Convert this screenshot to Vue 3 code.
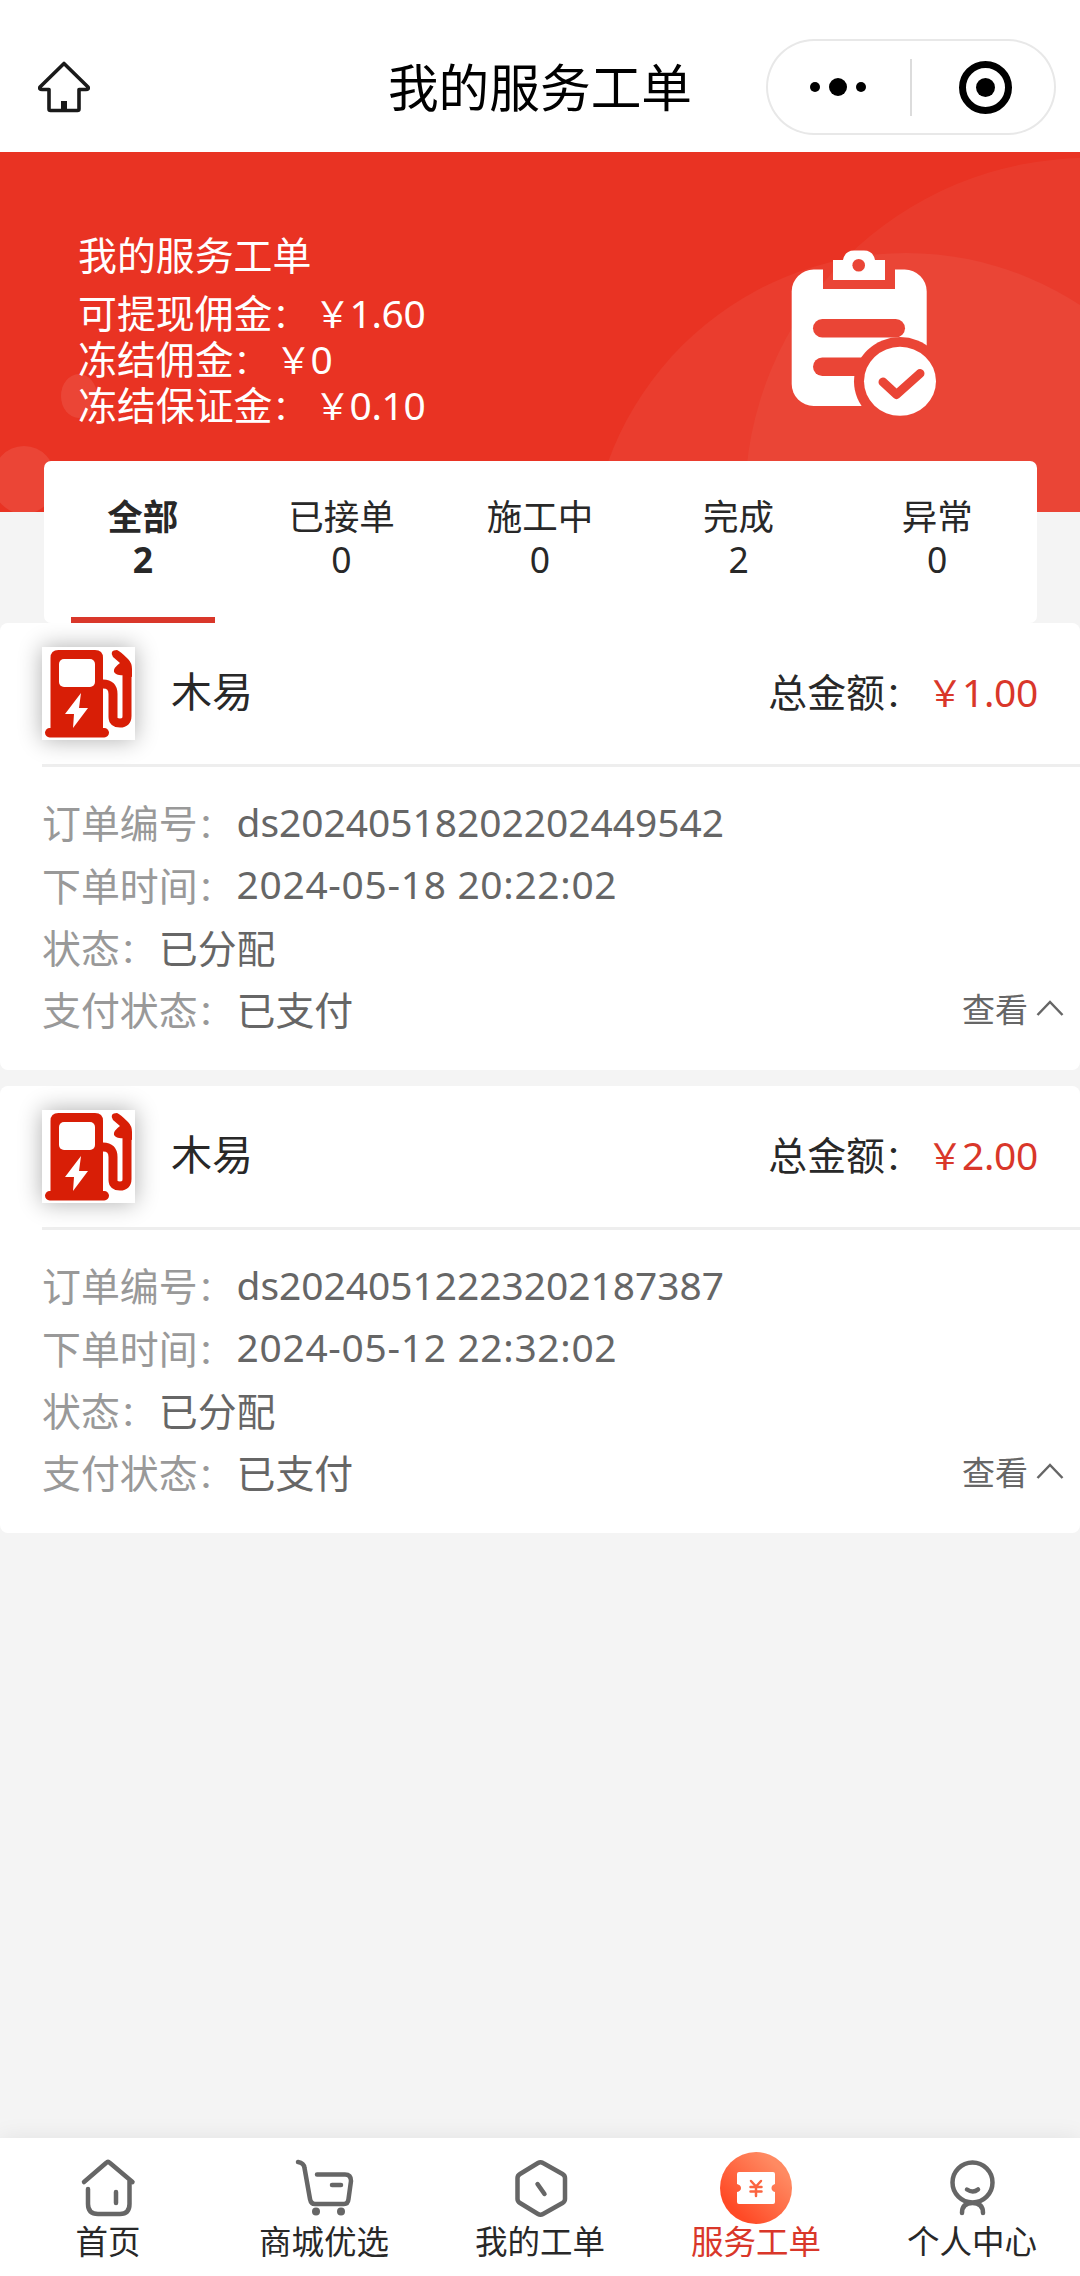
<script setup>
const summary = [
  { label: '可提现佣金', value: '1.60' },
  { label: '冻结佣金', value: '0' },
  { label: '冻结保证金', value: '0.10' },
]
const tabs = [
  { label: '全部', count: 2 },
  { label: '已接单', count: 0 },
  { label: '施工中', count: 0 },
  { label: '完成', count: 2 },
  { label: '异常', count: 0 },
]
const orders = [
  { name: '木易', total: '1.00', no: 'ds20240518202202449542', time: '2024-05-18 20:22:02', status: '已分配', pay: '已支付' },
  { name: '木易', total: '2.00', no: 'ds20240512223202187387', time: '2024-05-12 22:32:02', status: '已分配', pay: '已支付' },
]
const nav = [
  { label: '首页', icon: 'home' },
  { label: '商城优选', icon: 'cart' },
  { label: '我的工单', icon: 'hex' },
  { label: '服务工单', icon: 'ticket' },
  { label: '个人中心', icon: 'user' },
]
</script>

<template>
  <div class="page">
    <header class="bar">
      <svg class="bar-home" viewBox="0 0 52 52" width="52" height="52">
        <path d="M26 2.500 L2 26 Q1 28.500 4 28.500 H11 V48 Q11 49.500 12.500 49.500 H39.500 Q41 49.500 41 48 V28.500 H48 Q51 28.500 50 26 Z" fill="none" stroke="#1a1a1a" stroke-width="3.600" stroke-linejoin="round" />
        <rect x="23" y="40" width="6" height="9" fill="#1a1a1a" />
      </svg>
      <h1 class="title">我的服务工单</h1>
      <div class="capsule">
        <svg viewBox="0 0 290 96" width="290" height="96">
          <circle cx="49" cy="48" r="5" />
          <circle cx="72" cy="48" r="9" />
          <circle cx="95" cy="48" r="5" />
          <rect x="144" y="20" width="2" height="57" fill="#dcdcdc" />
          <circle cx="219.500" cy="48.500" r="23" fill="none" stroke="#000" stroke-width="7" />
          <circle cx="219.500" cy="48.500" r="9.500" />
        </svg>
      </div>
    </header>

    <section class="banner">
      <svg class="banner-bg" viewBox="0 152 1080 360" width="1080" height="360">
        <g fill="#fff">
          <circle cx="1088" cy="501" r="343" opacity=".045" />
          <circle cx="906" cy="570" r="317" opacity=".05" />
          <ellipse cx="24" cy="480" rx="32" ry="34" opacity=".09" />
          <ellipse cx="79" cy="396" rx="18" ry="22" opacity=".09" />
        </g>
      </svg>
      <div class="banner-text">
        <div class="banner-title">我的服务工单</div>
        <div v-for="s in summary" :key="s.label" class="banner-line">{{ s.label }}<span class="colon">：</span><span class="yen">￥</span><span class="digits">{{ s.value }}</span></div>
      </div>
      <svg class="clipboard" viewBox="790 249 150 170" width="150" height="170">
        <mask id="board">
          <rect x="790" y="249" width="150" height="170" fill="#fff" />
          <rect x="823" y="249" width="72" height="40" fill="#000" />
          <rect x="813" y="319" width="92" height="18.500" rx="9.250" fill="#000" />
          <rect x="813" y="357.500" width="92" height="18.500" rx="9.250" fill="#000" />
          <ellipse cx="900" cy="381.500" rx="46" ry="44.500" fill="#000" />
        </mask>
        <mask id="tick">
          <rect x="790" y="249" width="150" height="170" fill="#fff" />
          <circle cx="858.700" cy="265.300" r="6.300" fill="#000" />
          <path d="M883 382 L896.500 394.500 L920 373.500" fill="none" stroke="#000" stroke-width="9" stroke-linecap="round" stroke-linejoin="round" />
        </mask>
        <rect x="791.700" y="269.500" width="135" height="136.500" rx="22" fill="#fff" mask="url(#board)" />
        <g mask="url(#tick)" fill="#fff">
          <path d="M833 260 H843 Q845 250.500 854 250.500 H864 Q873 250.500 875 260 H885 V280 H833 Z" />
          <ellipse cx="900" cy="381.300" rx="36" ry="34.500" />
        </g>
      </svg>
    </section>

    <nav class="tabs">
      <div v-for="(t, i) in tabs" :key="t.label" class="tab" :class="{ active: i === 0 }">
        <span>{{ t.label }}</span>
        <span>{{ t.count }}</span>
      </div>
    </nav>

    <main class="orders">
      <article v-for="o in orders" :key="o.no" class="card">
        <div class="card-head">
          <div class="thumb">
            <svg viewBox="0 0 93 93" width="93" height="93">
              <g fill="#d81e06">
                <path d="M8.500 86 V11 Q8.500 3 16.500 3 H53 Q61 3 61 11 V86 Z" />
                <rect x="3" y="81" width="64" height="9.500" rx="4.700" />
              </g>
              <rect x="17" y="12" width="36" height="28" rx="5" fill="#fff" />
              <path d="M39 46 L23 67 H32 L31 81 L46 61 H37 Z" fill="#fff" />
              <path d="M61 37 Q71 37 71 47 V70 Q71 76 78 76 Q85 76 85 69 V22" fill="none" stroke="#d81e06" stroke-width="9" />
              <path d="M71 10 Q67 3 75 3 Q78 4 86 12 Q90 16 90 22 V30 L82 28 Q75 29 72 25 Q71 21 78 16 Z" fill="#d81e06" />
            </svg>
          </div>
          <div class="name">{{ o.name }}</div>
          <div class="total">总金额<span class="colon">：</span><span class="money"><span class="yen">￥</span><span class="digits">{{ o.total }}</span></span></div>
        </div>
        <div class="card-body">
          <div class="row"><span class="key">订单编号<span class="colon">：</span></span><span class="no">{{ o.no }}</span></div>
          <div class="row"><span class="key">下单时间<span class="colon">：</span></span><span class="time">{{ o.time }}</span></div>
          <div class="row"><span class="key">状态<span class="colon">：</span></span>{{ o.status }}</div>
          <div class="row">
            <span class="key">支付状态<span class="colon">：</span></span>{{ o.pay }}
            <span class="more">查看
              <svg viewBox="0 0 28 16" width="28" height="16"><path d="M1.500 15 L14 2 L26.500 15" fill="none" stroke="#666" stroke-width="2.500" /></svg>
            </span>
          </div>
        </div>
      </article>
    </main>

    <footer class="nav">
      <div v-for="(n, i) in nav" :key="n.label" class="nav-item" :class="{ on: i === 3 }">
        <svg viewBox="0 0 76 76" width="76" height="76" fill="none" stroke="#666" stroke-width="4.500" stroke-linecap="round" stroke-linejoin="round">
          <template v-if="n.icon === 'home'">
            <path d="M14 32 L36 13 Q38 11 40 13 L62.500 32 M59.500 30 V54 Q59.500 64 50 64 H28 Q18 64 18 54 V39" />
            <path d="M46 42 V53" />
          </template>
          <template v-else-if="n.icon === 'cart'">
            <path d="M12 12 Q18 13 18.500 18 L24 49 Q25 54 29 54 H58 Q62 54 62.500 49 L65 31 Q65 24.500 59 24.500 H31" />
            <path d="M46 35 H55" />
            <circle cx="30" cy="61.500" r="4" fill="#666" stroke="none" />
            <circle cx="55" cy="61.500" r="4" fill="#666" stroke="none" />
          </template>
          <template v-else-if="n.icon === 'hex'">
            <path d="M36 13 Q38.500 11.500 41 13 L60.500 24 Q63 25.500 63 28 V49 Q63 51.500 60.500 53 L41 64 Q38.500 65.500 36 64 L18 53 Q15.500 51.500 15.500 49 V28 Q15.500 25.500 18 24 Z" />
            <path d="M35.500 34 L42.500 44" />
          </template>
          <template v-else-if="n.icon === 'ticket'">
            <defs>
              <linearGradient id="orange" x1="0" y1="1" x2="1" y2="0">
                <stop offset="0.200" stop-color="#ff4a26" />
                <stop offset="0.800" stop-color="#ff8a62" />
              </linearGradient>
            </defs>
            <g stroke="none">
              <circle cx="38" cy="38" r="36" fill="url(#orange)" />
              <path d="M21 22 H55 Q57 22 57 24 V34 Q53.500 35 53.500 38 Q53.500 41 57 42 V52 Q57 54 55 54 H21 Q19 54 19 52 V42 Q23 41 23 38 Q23 35 19 34 V24 Q19 22 21 22 Z" fill="#fff" />
            </g>
            <path d="M33 31 L38 36.500 L43 31 M38 36.500 V46 M32.500 37 H43.500 M32.500 41.500 H43.500" stroke="#fb6440" stroke-width="2.500" />
          </template>
          <template v-else>
            <circle cx="38.500" cy="32.500" r="20" />
            <path d="M33 39.500 Q39 43.500 44 39.500 M28 63 Q28 53 38.500 53 Q49 53 49 63" />
          </template>
        </svg>
        <span>{{ n.label }}</span>
      </div>
    </footer>
  </div>
</template>

<style>
body {
  background: #f4f4f4;
}
</style>

<style scoped>
.page {
  width: 1080px;
  height: 2276px;
  display: flex;
  flex-direction: column;
  background: #f4f4f4;
  font-family: "Noto Sans", "Noto Sans CJK SC", sans-serif;
  font-size: 38.900px;
  color: #282828;
  overflow: hidden;
}
.bar {
  height: 152px;
  flex: none;
  display: grid;
  grid-template-columns: 1fr auto 1fr;
  align-items: center;
  padding: 24px 24px 0 38px;
  box-sizing: border-box;
  background: #fff;
}
.bar-home {
  display: block;
  margin-top: -3px;
}
.title {
  margin: 0 14px 1px 0;
  font-weight: 400;
  font-size: 50.700px;
  line-height: 60px;
  color: #000;
}
.capsule {
  justify-self: end;
  width: 290px;
  height: 96px;
  box-sizing: border-box;
  border-radius: 48px;
  box-shadow: inset 0 0 0 2px #e8e8e8;
  margin-bottom: 2px;
}
.banner {
  position: relative;
  height: 360px;
  flex: none;
  display: flex;
  justify-content: space-between;
  background: #e93323;
  color: #fff;
}
.banner-bg {
  position: absolute;
  left: 0;
  top: 0;
}
.banner-text {
  position: relative;
  padding: 80px 0 0 78px;
  line-height: 46px;
}
.banner-title {
  margin-bottom: 12px;
}
.banner-line {
  height: 46px;
}
.colon {
  margin-right: 5px;
  font-size: 34px;
  line-height: 1;
}
.yen {
  margin: 0 -1px 0 3px;
  font-size: 36px;
  line-height: 1;
}
.digits {
  letter-spacing: -0.300px;
}
.clipboard {
  position: relative;
  margin: 97px 140px 0 0;
}
.tabs {
  position: relative;
  flex: none;
  display: flex;
  width: 993px;
  height: 162px;
  margin: -51px auto 0 44px;
  border-radius: 7px;
  background: #fff;
  font-size: 35.500px;
}
.tab {
  flex: 1;
  display: flex;
  flex-direction: column;
  align-items: center;
  padding: 34px 1px 0 0;
  line-height: 42.500px;
}
.active {
  font-weight: 700;
  background: linear-gradient(#d9372a, #d9372a) center bottom / 144px 6px no-repeat;
}
.orders {
  flex: 1;
  display: flex;
  flex-direction: column;
  gap: 16px;
}
.card {
  height: 447px;
  border-radius: 8px;
  background: #fff;
}
.card-head {
  display: flex;
  align-items: center;
  height: 144px;
  box-sizing: border-box;
  padding: 0 42px 0 0;
  margin-left: 42px;
  border-bottom: 3px solid #eee;
}
.thumb {
  width: 93px;
  height: 93px;
  background: #fff;
  box-shadow: 0 0 22px rgba(0, 0, 0, 0.32);
}
.name {
  flex: 1;
  margin: 0 0 10px 36px;
  font-size: 41px;
}
.total {
  margin-bottom: 8px;
}
.card-body {
  padding: 23px 16px 0 42px;
  color: #666;
}
.row {
  display: flex;
  align-items: center;
  height: 62.400px;
}
.key {
  color: #999;
}
.time {
  letter-spacing: 0.700px;
}
.money {
  color: #d9372a;
}
.more {
  display: flex;
  align-items: center;
  gap: 8px;
  margin-left: auto;
  font-size: 33px;
}
.nav {
  flex: none;
  display: flex;
  height: 138px;
  background: #fff;
  box-shadow: 0 0 22px rgba(0, 0, 0, 0.08);
}
.nav-item {
  flex: 1;
  display: flex;
  flex-direction: column;
  align-items: center;
  padding-top: 12px;
  font-size: 32.500px;
  line-height: 32px;
}
.on {
  color: #d9372a;
}
</style>
